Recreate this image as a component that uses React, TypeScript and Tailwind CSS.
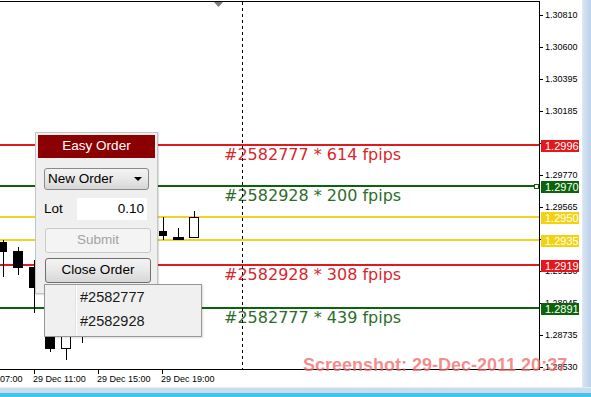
import React from "react";

// price axis scale: one tick every 32px (null = covered by an order label)
const PRICE_TICKS: (string | null)[] = [
  "1.30810", "1.30600", "1.30395", "1.30185", null, "1.29770",
  "1.29565", null, "1.29150", "1.28945", "1.28735", "1.28530",
];

interface Level {
  y: number;
  price: string;
  kind: "red" | "green" | "yellow";
}

const LEVELS: Level[] = [
  { y: 145, price: "1.2996", kind: "red" },
  { y: 186, price: "1.2970", kind: "green" },
  { y: 217, price: "1.2950", kind: "yellow" },
  { y: 240, price: "1.2935", kind: "yellow" },
  { y: 265, price: "1.2919", kind: "red" },
  { y: 308, price: "1.2891", kind: "green" },
];

const LINE_COLOR = { red: "#e01a1e", green: "#0b640b", yellow: "#f3d321" };

const LABEL_BG = {
  red: "bg-[#e4181c]",
  green: "bg-[#0b640b]",
  yellow: "bg-[#f3d30f]",
};

const ORDER_TEXT = [
  { y: 160, text: "#2582777 * 614 fpips", color: "#d9262c" },
  { y: 201, text: "#2582928 * 200 fpips", color: "#2c6d2c" },
  { y: 280, text: "#2582928 * 308 fpips", color: "#d9262c" },
  { y: 323, text: "#2582777 * 439 fpips", color: "#2c6d2c" },
];

const TIME_TICKS = [
  { x: -30, label: "29 Dec 07:00" },
  { x: 34, label: "29 Dec 11:00" },
  { x: 98, label: "29 Dec 15:00" },
  { x: 162, label: "29 Dec 19:00" },
];

// x = body left, w = body width, top/bot = body, hi/lo = wick
const CANDLES = [
  { x: 0, w: 7, top: 242, bot: 252, hi: 240, lo: 277, bull: false },
  { x: 13, w: 10, top: 251, bot: 268, hi: 247, lo: 275, bull: false },
  { x: 29, w: 10, top: 267, bot: 288, hi: 260, lo: 313, bull: false },
  { x: 45, w: 10, top: 328, bot: 349, hi: 320, lo: 352, bull: false },
  { x: 61, w: 10, top: 330, bot: 349, hi: 325, lo: 360, bull: true },
  { x: 78, w: 9, top: 335, bot: 337, hi: 330, lo: 343, bull: false },
  { x: 159, w: 8, top: 231, bot: 236, hi: 217, lo: 240, bull: false },
  { x: 173, w: 11, top: 237, bot: 240, hi: 228, lo: 240, bull: false },
  { x: 189, w: 10, top: 217, bot: 238, hi: 211, lo: 217, bull: true },
];

const Chart = () => (
  <svg
    className="absolute inset-0"
    width={539}
    height={367}
    viewBox="0 2 539 367"
  >
    {/* order levels */}
    {LEVELS.map((l) => (
      <rect key={l.price} x={0} y={l.y - 1} width={539} height={2} fill={LINE_COLOR[l.kind]} />
    ))}
    <rect x={534.5} y={184.5} width={4} height={4} fill="#fff" stroke="#0b640b" />

    {/* candles */}
    {CANDLES.map((c, i) => {
      const cx = c.x + Math.floor(c.w / 2) + 0.5;
      return (
        <g key={i}>
          <line x1={cx} y1={c.hi} x2={cx} y2={c.lo} stroke="#000" />
          {c.bull ? (
            <rect x={c.x + 0.5} y={c.top + 0.5} width={c.w - 1} height={c.bot - c.top - 1} fill="#fff" stroke="#000" />
          ) : (
            <rect x={c.x} y={c.top} width={c.w} height={c.bot - c.top} fill="#000" />
          )}
        </g>
      );
    })}

    {ORDER_TEXT.map((t) => (
      <text
        key={t.text}
        x={224}
        y={t.y}
        fill={t.color}
        fontSize={16}
        fontFamily="'DejaVu Sans', Verdana, sans-serif"
      >
        {t.text}
      </text>
    ))}

    {/* period separator + shift marker */}
    <line x1={242.5} y1={2} x2={242.5} y2={369} stroke="#000" strokeDasharray="3 3" />
    <polygon points="214,2 223,2 218.5,7" fill="#7a7a7a" />
  </svg>
);

const PriceAxis = () => (
  <div className="relative h-[370px] w-[42px] bg-white">
    {PRICE_TICKS.map((p, i) => {
      const y = Math.round(14.7 + 32.05 * i);
      return (
        <React.Fragment key={i}>
          <div className="absolute left-0 h-px w-[3px] bg-black" style={{ top: y }} />
          {p && (
            <div
              className="absolute left-[5px] text-[9px] leading-[9px] text-black"
              style={{ top: y - 4.5 }}
            >
              {p}
            </div>
          )}
        </React.Fragment>
      );
    })}
    {LEVELS.map((l) => (
      <div
        key={l.price}
        className={`absolute left-px h-[12px] w-[38px] pl-[4px] text-[11px] leading-[12px] text-white ${LABEL_BG[l.kind]}`}
        style={{ top: l.y - 5 }}
      >
        {l.price}
      </div>
    ))}
  </div>
);

const TimeAxis = () => (
  <div className="relative h-[17px] w-[582px] bg-white">
    {TIME_TICKS.map((t) => (
      <React.Fragment key={t.label}>
        <div className="absolute top-0 h-[4px] w-px bg-black" style={{ left: t.x }} />
        <div
          className="absolute top-[5px] whitespace-nowrap text-[9px] leading-[9px] text-black"
          style={{ left: t.x - 1 }}
        >
          {t.label}
        </div>
      </React.Fragment>
    ))}
  </div>
);

const buttonFace =
  "rounded-[3px] border border-[#8a8a8a] bg-gradient-to-b from-[#f4f4f4] via-[#e8e8e8] to-[#d6d6d6]";

const EasyOrderPanel = () => (
  <div className="absolute left-[35px] top-[132px] h-[162px] w-[123px] border border-[#c4c4c4] bg-[#efefef] p-[2px] text-[13.5px] text-black shadow-[1px_1px_1px_rgba(0,0,0,0.12)]">
    <div className="flex h-[23px] items-center justify-center bg-[#8b0000] text-white">
      Easy Order
    </div>
    <div className="flex flex-col pl-[6px]">
      <div className={`mt-[10px] flex h-[22px] w-[105px] items-center justify-between pl-[3px] pr-[6px] ${buttonFace}`}>
        <span>New Order</span>
        <span className="h-0 w-0 border-x-[4px] border-t-[4px] border-x-transparent border-t-black" />
      </div>
      <div className="mt-[8px] flex h-[22px] items-center">
        <span className="w-[33px]">Lot</span>
        <div className="flex h-[22px] w-[70px] items-center justify-end bg-white pr-[3px]">0.10</div>
      </div>
      <div className="ml-px mt-[8px] flex h-[25px] w-[106px] items-center justify-center rounded-[3px] border border-[#c9c9c9] bg-[#f4f4f4] text-[#a3a3a3]">
        Submit
      </div>
      <div className={`ml-px mt-[5px] flex h-[25px] w-[106px] items-center justify-center ${buttonFace} border-[#707070]`}>
        Close Order
      </div>
    </div>
  </div>
);

const OrderMenu = () => (
  <div className="absolute left-[44px] top-[284px] flex h-[53px] w-[158px] border border-[#979797] bg-[#f0f0f0] text-[14.5px] text-[#1a1a1a] shadow-[1px_1px_2px_rgba(0,0,0,0.15)]">
    <div className="w-[31px] border-r border-[#e2e3e3]" />
    <div className="flex flex-col border-l border-white pt-[1px]">
      <div className="flex h-[24px] items-center pl-[3px]">#2582777</div>
      <div className="flex h-[24px] items-center pl-[3px]">#2582928</div>
    </div>
  </div>
);

export default function App() {
  return (
    <div className="relative flex h-[397px] w-[591px] flex-col overflow-hidden bg-white font-['Liberation_Sans',Arial,sans-serif]">
      <div className="flex h-[387px]">
        <div className="flex w-[582px] flex-col">
          <div className="flex h-[370px]">
            <div className="relative mt-px h-[369px] w-[540px] border-y border-r border-black">
              <Chart />
            </div>
            <PriceAxis />
          </div>
          <TimeAxis />
        </div>
        <div className="w-[9px] border-l border-[#dfe8f1] bg-gradient-to-r from-[#d6e4f2] to-[#bcd2ea]" />
      </div>
      <div className="flex h-[10px] flex-col">
        <div className="h-px bg-[#e6edf4]" />
        <div className="h-[5px] bg-[#c9dcef]" />
        <div className="h-[4px] bg-[#44c3ea]" />
      </div>

      <EasyOrderPanel />
      <OrderMenu />

      <div className="absolute left-[303px] top-[356px] whitespace-nowrap text-[18px] font-bold leading-[18px] text-[#f06868]/75">
        Screenshot: 29-Dec-2011 20:37
      </div>
    </div>
  );
}
